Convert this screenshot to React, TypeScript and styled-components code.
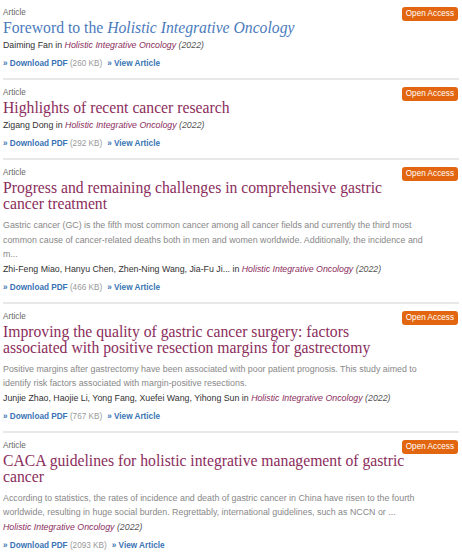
import React from "react";
import styled, { createGlobalStyle } from "styled-components";

const Global = createGlobalStyle`
  html, body { margin: 0; padding: 0; background: #fff; }
  body { font-family: "Liberation Sans", Arial, sans-serif; }
`;

const List = styled.div`
  padding: 0 3px;
`;

const Item = styled.div`
  position: relative;
  padding: 7px 0 7px;
  border-bottom: 2px solid #e8e8e8;
`;

const Badge = styled.span`
  position: absolute;
  right: 1px;
  top: 7px;
  background: #e2660f;
  color: #fff;
  font-size: 8.2px;
  line-height: 14px;
  padding: 0 4px;
  border-radius: 3px;
`;

const Kind = styled.div`
  font-size: 8.2px;
  line-height: 12px;
  color: #666;
`;

const Content = styled.div`
  max-width: 430px;
`;

const Title = styled.div<{ $visited?: boolean }>`
  max-width: 405px;
  margin-top: 1px;
  font-family: "Liberation Serif", "Times New Roman", serif;
  font-size: 15.7px;
  line-height: 16px;
  color: ${(p) => (p.$visited ? "#4a7bbd" : "#8b2d5c")};
`;

const Abstract = styled.div`
  margin-top: 6px;
  font-size: 8.85px;
  line-height: 14.5px;
  color: #888;
`;

const Authors = styled.div<{ $gap: boolean }>`
  margin-top: ${(p) => (p.$gap ? "2px" : "0")};
  font-size: 8.8px;
  line-height: 14px;
  color: #333;
`;

const Journal = styled.i`
  color: #8b2d5c;
`;

const Year = styled.i`
  color: #555;
`;

const Links = styled.div`
  margin-top: 5px;
  font-size: 8.2px;
  line-height: 14px;
  display: flex;
  gap: 5px;
`;

const LinkA = styled.a`
  color: #3a74b4;
  font-weight: bold;
  text-decoration: none;
`;

const Size = styled.span`
  color: #999;
  font-weight: normal;
`;

type Entry = {
  title: React.ReactNode;
  abstract?: string;
  authors?: string;
  size: string;
  visited?: boolean;
};

const entries: Entry[] = [
  {
    title: (
      <>
        Foreword to the <i>Holistic Integrative Oncology</i>
      </>
    ),
    authors: "Daiming Fan",
    size: "260 KB",
    visited: true,
  },
  {
    title: "Highlights of recent cancer research",
    authors: "Zigang Dong",
    size: "292 KB",
  },
  {
    title: "Progress and remaining challenges in comprehensive gastric cancer treatment",
    abstract:
      "Gastric cancer (GC) is the fifth most common cancer among all cancer fields and currently the third most common cause of cancer-related deaths both in men and women worldwide. Additionally, the incidence and m...",
    authors: "Zhi-Feng Miao, Hanyu Chen, Zhen-Ning Wang, Jia-Fu Ji...",
    size: "466 KB",
  },
  {
    title:
      "Improving the quality of gastric cancer surgery: factors associated with positive resection margins for gastrectomy",
    abstract:
      "Positive margins after gastrectomy have been associated with poor patient prognosis. This study aimed to identify risk factors associated with margin-positive resections.",
    authors: "Junjie Zhao, Haojie Li, Yong Fang, Xuefei Wang, Yihong Sun",
    size: "767 KB",
  },
  {
    title: "CACA guidelines for holistic integrative management of gastric cancer",
    abstract:
      "According to statistics, the rates of incidence and death of gastric cancer in China have risen to the fourth worldwide, resulting in huge social burden. Regrettably, international guidelines, such as NCCN or ...",
    size: "2093 KB",
  },
];

export default function App() {
  return (
    <>
      <Global />
      <List>
        {entries.map((e, i) => (
          <Item key={i}>
            <Badge>Open Access</Badge>
            <Kind>Article</Kind>
            <Content>
              <Title $visited={e.visited}>{e.title}</Title>
              {e.abstract && <Abstract>{e.abstract}</Abstract>}
              <Authors $gap={!e.abstract}>
                {e.authors ? `${e.authors} in ` : ""}
                <Journal>Holistic Integrative Oncology</Journal> <Year>(2022)</Year>
              </Authors>
            </Content>
            <Links>
              <LinkA href="#">
                » Download PDF <Size>({e.size})</Size>
              </LinkA>
              <LinkA href="#">» View Article</LinkA>
            </Links>
          </Item>
        ))}
      </List>
    </>
  );
}
